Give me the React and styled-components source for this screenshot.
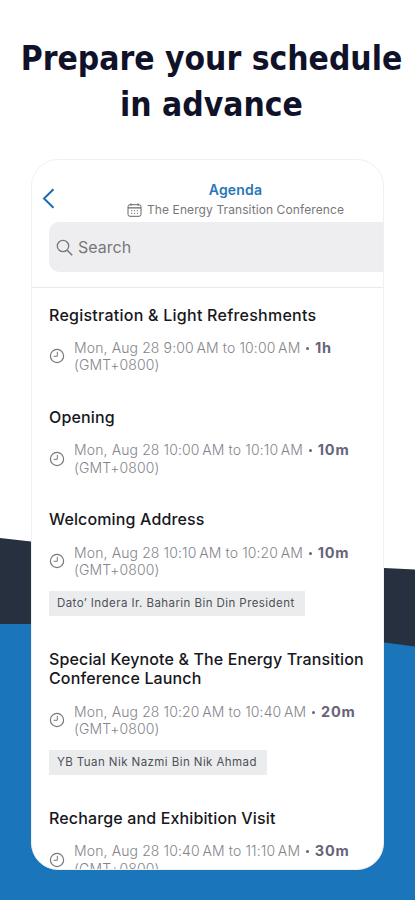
import React from 'react';
import styled, { createGlobalStyle } from 'styled-components';

const colors = {
  blue: '#1b75bb',
  dark: '#27303e',
  heading: '#0f1229',
  title: '#17171c',
  muted: '#85858b',
  duration: '#686478',
  field: '#eeeef0',
  tag: '#ebecee',
};

const GlobalStyle = createGlobalStyle`
  * {
    box-sizing: border-box;
  }

  body {
    margin: 0;
    background: #fff;
    font-family: Inter, 'Liberation Sans', sans-serif;
  }
`;

const Page = styled.div`
  position: relative;
  overflow: hidden;

  display: flex;
  flex-direction: column;
  align-items: center;

  height: 900px;
`;

const Backdrop = styled.svg`
  position: absolute;
  inset: 0;
  z-index: -1;
`;

const Headline = styled.h1`
  margin: 0;
  padding: 36px 0 0 8px;
  height: 159px;

  color: ${colors.heading};
  font-family: 'DejaVu Sans Condensed', 'DejaVu Sans', sans-serif;
  font-size: 33.3px;
  font-stretch: condensed;
  font-weight: 700;
  line-height: 46px;
  text-align: center;
  white-space: nowrap;

  span {
    display: block;
  }
`;

const Card = styled.main`
  overflow: hidden;

  width: 353px;
  height: 711px;

  border: 1px solid #f0f0f1;
  border-radius: 27px;
  background: #fff;
`;

const Header = styled.header`
  display: grid;
  grid-template-columns: 32px 1fr;
  align-items: center;

  height: 62px;
  padding-top: 18px;
`;

const BackButton = styled.button`
  display: flex;
  justify-content: center;

  margin: 0;
  padding: 0 0 3px;

  border: 0;
  background: none;
  color: #1d6db5;
`;

const HeaderText = styled.div`
  display: flex;
  flex-direction: column;
  align-items: center;

  padding-left: 24px;

  white-space: nowrap;
`;

const HeaderTitle = styled.div`
  color: #2a77b8;
  font-size: 14px;
  font-weight: 600;
  line-height: 20px;
  letter-spacing: 0.2px;
`;

const HeaderSubtitle = styled.div`
  display: flex;
  align-items: center;
  gap: 5px;

  color: #77777b;
  font-size: 12px;
  line-height: 20px;
  letter-spacing: 0.1px;
`;

const SearchField = styled.div`
  display: flex;
  align-items: center;
  gap: 5px;

  height: 50px;
  margin-left: 17px;
  padding-left: 7px;

  border-radius: 10px 0 0 10px;
  background: ${colors.field};
  color: #77777c;
  font-size: 16px;
`;

const Divider = styled.hr`
  height: 1px;
  margin: 15px 0 1px;
  border: 0;
  background: #e9e9ea;
`;

const List = styled.ul`
  display: flex;
  flex-direction: column;
  gap: 33.3px;

  margin: 0;
  padding: 16.5px 0 0 17px;
  list-style: none;
`;

const Title = styled.h2`
  margin: 0 0 14px;

  color: ${colors.title};
  font-size: 16px;
  font-weight: 500;
  line-height: 19.5px;
  letter-spacing: ${(props) => props.$tracking || '0.14px'};
  white-space: pre-line;
`;

const Meta = styled.div`
  display: flex;
  align-items: center;
  gap: 9px;

  margin-bottom: 0.7px;

  color: ${colors.muted};
  font-size: 14px;
  font-weight: 300;
  line-height: 17.4px;
  letter-spacing: 0.12px;
  white-space: nowrap;
`;

const Dot = styled.span`
  display: inline-block;

  width: 3px;
  height: 3px;
  margin: 0 6.2px 3px 5.5px;

  border-radius: 50%;
  background: ${colors.duration};
`;

const Duration = styled.strong`
  color: ${colors.duration};
  font-size: 14.5px;
  font-weight: 700;
  letter-spacing: 0.8px;
  line-height: 1;
`;

const Tag = styled.div`
  display: inline-block;

  height: 24.5px;
  margin: 12px 0 0.8px;
  padding: 0 10px 0 8px;

  background: ${colors.tag};
  color: #4e5056;
  font-size: 11.5px;
  line-height: 24px;
  letter-spacing: 0.43px;
  vertical-align: top;
`;

const ClockIcon = () => (
  <svg width="16" height="16" viewBox="0 0 16 16" fill="none" stroke="#77777e" strokeWidth="1.2">
    <circle cx="8" cy="8" r="6.6" />
    <path d="M8.3 3.8V8.3H4.6" strokeWidth="1" />
  </svg>
);

const CalendarIcon = () => (
  <svg width="15" height="14" viewBox="0 0 15 14" fill="none" stroke="#66666a">
    <rect x="1" y="1.7" width="13" height="11.6" rx="2" />
    <path d="M1 4.9h13" strokeWidth="1.2" />
    <path d="M4 0.3v2.4M11 0.3v2.4" />
    <path d="M4 7.7h7.5M4 10.3h7.5" strokeDasharray="1.3 1.6" strokeWidth="0.9" />
  </svg>
);

const SearchIcon = () => (
  <svg width="17" height="17" viewBox="0 0 17 17" fill="none" stroke="#77777c" strokeWidth="1.3">
    <circle cx="7" cy="7" r="5.7" />
    <path d="M11.2 11.2l5 5" strokeWidth="1.6" />
  </svg>
);

const sessions = [
  {
    title: 'Registration & Light Refreshments',
    tracking: '0.25px',
    from: '9:00',
    to: '10:00',
    duration: '1h',
  },
  { title: 'Opening', from: '10:00', to: '10:10', duration: '10m' },
  {
    title: 'Welcoming Address',
    from: '10:10',
    to: '10:20',
    duration: '10m',
    speaker: 'Dato’ Indera Ir. Baharin Bin Din President',
  },
  {
    title: 'Special Keynote & The Energy Transition\nConference Launch',
    from: '10:20',
    to: '10:40',
    duration: '20m',
    speaker: 'YB Tuan Nik Nazmi Bin Nik Ahmad',
  },
  { title: 'Recharge and Exhibition Visit', from: '10:40', to: '11:10', duration: '30m' },
];

const Session = ({ title, tracking, from, to, duration, speaker }) => (
  <li>
    <Title $tracking={tracking}>{title}</Title>
    <Meta>
      <ClockIcon />
      <div>
        Mon, Aug 28 {from}&#8201;AM to {to}&#8201;AM
        <Dot />
        <Duration>{duration}</Duration>
        <br />
        (GMT+0800)
      </div>
    </Meta>
    {speaker && <Tag>{speaker}</Tag>}
  </li>
);

const App = () => (
  <Page>
    <GlobalStyle />
    <Backdrop width="415" height="900" viewBox="0 0 415 900">
      <path d="M0 538L31 541.5L384 568L415 569.5V900H0Z" fill={colors.dark} />
      <path d="M0 624H31Q230 625 384 642.5L415 646.5V900H0Z" fill={colors.blue} />
    </Backdrop>

    <Headline>
      <span>Prepare your schedule</span>
      <span>in advance</span>
    </Headline>

    <Card>
      <Header>
        <BackButton aria-label="Back">
          <svg width="13" height="21" viewBox="0 0 13 21" fill="none" stroke="currentColor" strokeWidth="2">
            <path d="M11.5 1.2L2 10.5L11.5 19.8" />
          </svg>
        </BackButton>
        <HeaderText>
          <HeaderTitle>Agenda</HeaderTitle>
          <HeaderSubtitle>
            <CalendarIcon />
            The Energy Transition Conference
          </HeaderSubtitle>
        </HeaderText>
      </Header>

      <SearchField>
        <SearchIcon />
        Search
      </SearchField>
      <Divider />

      <List>
        {sessions.map((session) => (
          <Session key={session.title} {...session} />
        ))}
      </List>
    </Card>
  </Page>
);

export default App;
